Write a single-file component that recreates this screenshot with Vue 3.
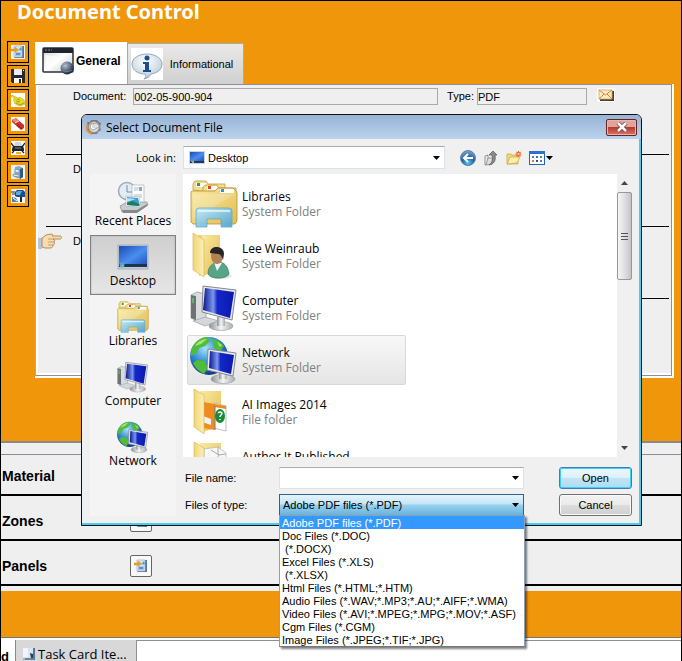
<script setup>
import { ref } from 'vue'

const tools = [
  { icon: 'i-import', name: 'Import' },
  { icon: 'i-save', name: 'Save' },
  { icon: 'i-point', name: 'Assign' },
  { icon: 'i-erase', name: 'Erase' },
  { icon: 'i-print', name: 'Print' },
  { icon: 'i-cabinet', name: 'Archive' },
  { icon: 'i-mailbox', name: 'Send' }
]

const places = [
  { icon: 'i-recent', name: 'Recent Places' },
  { icon: 'i-desktop', name: 'Desktop', active: true },
  { icon: 'i-libraries', name: 'Libraries' },
  { icon: 'i-computer', name: 'Computer' },
  { icon: 'i-network', name: 'Network' }
]

const entries = [
  { icon: 'i-libraries', name: 'Libraries', kind: 'System Folder' },
  { icon: 'i-user', name: 'Lee Weinraub', kind: 'System Folder' },
  { icon: 'i-computer', name: 'Computer', kind: 'System Folder' },
  { icon: 'i-network', name: 'Network', kind: 'System Folder', active: true },
  { icon: 'i-images', name: 'AI Images 2014', kind: 'File folder' },
  { icon: 'i-pages', name: 'Author It Published', kind: 'File folder' }
]

const types = [
  'Adobe PDF files (*.PDF)',
  'Doc Files (*.DOC)',
  ' (*.DOCX)',
  'Excel Files (*.XLS)',
  ' (*.XLSX)',
  'Html Files (*.HTML;*.HTM)',
  'Audio Files (*.WAV;*.MP3;*.AU;*.AIFF;*.WMA)',
  'Video Files (*.AVI;*.MPEG;*.MPG;*.MOV;*.ASF)',
  'Cgm Files (*.CGM)',
  'Image Files (*.JPEG;*.TIF;*.JPG)'
]

const documentNo = ref('002-05-900-904')
const documentType = ref('PDF')
const fileName = ref('')
const fileType = ref(types[0])
const folder = ref('Desktop')
</script>

<template>
  <svg class="sprite" aria-hidden="true">
    <defs>
      <linearGradient id="g-folder" x1="0" y1="0" x2="1" y2="1">
        <stop offset="0" stop-color="#f9e9a0" /><stop offset="1" stop-color="#e3bd52" />
      </linearGradient>
      <linearGradient id="g-flap" x1="0" y1="0" x2="1" y2="0">
        <stop offset="0" stop-color="#f2d675" /><stop offset="1" stop-color="#fbf0bb" />
      </linearGradient>
      <linearGradient id="g-stand" x1="0" y1="0" x2="1" y2="1">
        <stop offset="0" stop-color="#c4ecfb" /><stop offset="1" stop-color="#4da3d2" />
      </linearGradient>
      <linearGradient id="g-screen" x1="0" y1="0" x2="1" y2="0">
        <stop offset="0" stop-color="#0a1590" /><stop offset=".33" stop-color="#7b98ee" />
        <stop offset=".46" stop-color="#1527c6" /><stop offset="1" stop-color="#0a18ae" />
      </linearGradient>
      <linearGradient id="g-desk" x1="0" y1="0" x2="1" y2="1">
        <stop offset="0" stop-color="#1c4cb4" /><stop offset=".55" stop-color="#4a8eee" /><stop offset="1" stop-color="#1f50bc" />
      </linearGradient>
      <radialGradient id="g-globe" cx=".4" cy=".3" r=".7">
        <stop offset="0" stop-color="#a5e2fa" /><stop offset=".55" stop-color="#2f86cc" /><stop offset="1" stop-color="#123a86" />
      </radialGradient>
      <linearGradient id="g-metal" x1="0" y1="0" x2="1" y2="0">
        <stop offset="0" stop-color="#8b8f94" /><stop offset=".5" stop-color="#f4f5f6" /><stop offset="1" stop-color="#a8abaf" />
      </linearGradient>
      <radialGradient id="g-ball" cx=".35" cy=".3" r=".7">
        <stop offset="0" stop-color="#b9c6d6" /><stop offset="1" stop-color="#1e2b3f" />
      </radialGradient>
      <radialGradient id="g-bubble" cx=".45" cy=".3" r=".75">
        <stop offset="0" stop-color="#ffffff" /><stop offset=".7" stop-color="#ccd8e4" /><stop offset="1" stop-color="#8fa6bd" />
      </radialGradient>
      <radialGradient id="g-back" cx=".5" cy=".85" r=".85">
        <stop offset="0" stop-color="#4fc5f0" /><stop offset=".5" stop-color="#24639f" /><stop offset="1" stop-color="#86a9cf" />
      </radialGradient>
      <linearGradient id="g-window" x1="0" y1="0" x2="1" y2="1">
        <stop offset="0" stop-color="#cfcfcf" /><stop offset=".5" stop-color="#fff" /><stop offset="1" stop-color="#c9c9c9" />
      </linearGradient>

      <symbol id="i-import" viewBox="0 0 14 14">
        <rect width="14" height="14" fill="#f4f6f8" />
        <path d="M11 1h2v12H4l-1-1h8z" fill="#54759c" /><path d="M3 1h8v11H3z" fill="#dce9f5" stroke="#9db3cc" stroke-width=".7" />
        <path d="M4 7h6v4H4z" fill="#a9c6e4" /><path d="M5 8h4v2H5z" fill="#5f92c8" /><path d="M8 4l2-2 1 3-2 1z" fill="#4ba3cf" />
        <path d="M0 4h4V2l4 3-4 2V6H0z" fill="#eda41d" stroke="#bc7411" stroke-width=".3" />
      </symbol>
      <symbol id="i-save" viewBox="0 0 14 14">
        <rect width="14" height="14" fill="#fff" />
        <path d="M0 0h14v14H1l-1-1z" fill="#26282c" /><path d="M3 0h8v6H3z" fill="#e7edf2" />
        <path d="M3 9h8v5H3z" fill="#fff" /><path d="M8 10h2v4H8z" fill="#26282c" /><path d="M12 1h1v1h-1z" fill="#fff" />
      </symbol>
      <symbol id="i-point" viewBox="0 0 14 14">
        <rect width="14" height="14" fill="#fff" />
        <path d="M0 3l1-1 6 3 2-1 4 3 1 4-4 2-4-1-3-2 1-1-2-2 2-1z" fill="#e9db28" stroke="#b3a218" stroke-width=".5" />
        <path d="M5 10l4 2 4-2M5 8l4 1M6 6l3 1" stroke="#8b831c" fill="none" stroke-width=".7" />
      </symbol>
      <symbol id="i-erase" viewBox="0 0 14 14">
        <rect width="14" height="14" fill="#fff" />
        <path d="M1 3l4-2 8 7v3l-3 2-9-8z" fill="#cf2f2c" /><path d="M1 3l4-2 3 3-4 2z" fill="#ec8680" />
        <path d="M4 6l4-2" stroke="#fff" stroke-width=".8" /><path d="M6 8l5 4" stroke="#821716" />
      </symbol>
      <symbol id="i-print" viewBox="0 0 14 14">
        <rect width="14" height="14" fill="#fff" />
        <path d="M4 1h6l1 4H3z" fill="#cdd7e0" /><path d="M2 5h10l1 3v2H1V8z" fill="#202328" />
        <path d="M0 2l3 4M14 2l-3 4M1 12l2-2M13 12l-2-2" stroke="#202328" stroke-width="1.300" /><path d="M5 11h5v2H5z" fill="#f1b32c" />
        <path d="M4 7h6" stroke="#7d8894" />
      </symbol>
      <symbol id="i-cabinet" viewBox="0 0 14 14">
        <rect width="14" height="14" fill="#eef3f8" />
        <path d="M4 2l4-1 4 2v9l-3 2-6-2z" fill="#8ea9c6" /><path d="M9 4l3-1v9l-3 2z" fill="#36587f" />
        <path d="M4 4l4 1v3L4 7zM2 9l6 1v2l-6-1z" fill="#e6f2fc" stroke="#55799f" stroke-width=".6" />
      </symbol>
      <symbol id="i-mailbox" viewBox="0 0 14 14">
        <rect width="14" height="14" fill="#f2f6fa" />
        <path d="M4 3l2-2h6l2 2v5H6L4 7z" fill="#174e8f" /><path d="M5 3l2-1h4L9 6H5z" fill="#5aaade" />
        <path d="M9 8h2v5H9z" fill="#23272c" /><path d="M0 3h4M1 5h3" stroke="#242b36" />
        <path d="M1 8l4 1 2 4H1z" fill="#557da9" /><path d="M2 9l4 3" stroke="#fff" />
      </symbol>
      <symbol id="i-hand" viewBox="0 0 24 17">
        <path d="M0 4h4v12H0z" fill="#dbe8f5" /><path d="M1 5v11M3 5v11" stroke="#7495bd" stroke-width=".8" />
        <path d="M4 5l4-3 5-1c2 0 2 1 1 2h8c2 0 2 3 0 3h-7c2 1 2 2 1 3 1 1 0 3-1 3 0 2-1 3-3 3H7l-3-1z" fill="#f8dcae" stroke="#a9834f" stroke-width=".9" />
        <path d="M10 6h5M10 9h6M10 12h5" stroke="#b8905a" stroke-width=".8" />
      </symbol>
      <symbol id="i-mail" viewBox="0 0 16 12">
        <path d="M2 2h14v10H2z" fill="#4b4137" /><path d="M1 1h13v9H1z" fill="#fdebc8" stroke="#d6a25b" stroke-width=".8" />
        <path d="M1 1l6.500 5L14 1M1 10l5-5M14 10L9 5" stroke="#d58b26" fill="none" />
      </symbol>
      <symbol id="i-general" viewBox="0 0 32 28">
        <rect x="1" y="1" width="30" height="24" rx="1" fill="url(#g-window)" stroke="#2b313b" stroke-width="1.500" />
        <path d="M1 1h30v5H1z" fill="#20252e" /><path d="M3 3h7" stroke="#7e8896" stroke-dasharray="2 1" />
        <path d="M3 8l14 2L4 22z" fill="#fff" opacity=".6" />
        <circle cx="25" cy="21" r="6.500" fill="url(#g-ball)" /><path d="M20 19c3-3 7-3 9 0M20 23c3 2 7 2 10 0" stroke="#7e91a9" fill="none" stroke-width=".7" />
      </symbol>
      <symbol id="i-info" viewBox="0 0 32 32">
        <rect width="32" height="32" fill="#fff" />
        <path d="M16 6c8 0 15 4 15 10s-5 9-11 10c-1 2-3 4-7 5 2-2 2-3 1-5C7 26 1 22 1 16S8 6 16 6z" fill="url(#g-bubble)" stroke="#94a8bd" />
        <circle cx="16" cy="10" r="2.500" fill="#1a4f8f" />
        <path d="M12 14h6v8h2v2h-8v-2h2v-6h-2z" fill="#1a4f8f" />
      </symbol>
      <symbol id="i-app" viewBox="0 0 16 16">
        <path d="M1 3h3l1-2h6l2 2 2 1-1 4 1 3-3 2-1 2H6l-2-2-3-2 1-3z" fill="#77797c" />
        <circle cx="8" cy="8" r="5.500" fill="#dcdcdc" stroke="#909090" />
        <path d="M1 6c-1 4 1 8 5 9" stroke="#f08a22" stroke-width="2" fill="none" />
        <path d="M5 5l6-1 2 4-6 3-3-2z" fill="#fff" stroke="#808080" stroke-width=".7" /><path d="M6 6l5 0M6 8l5 0" stroke="#999" stroke-width=".7" />
      </symbol>
      <symbol id="i-monitor" viewBox="0 0 16 14">
        <rect x="0" y="0" width="16" height="13" fill="#c7d4e4" /><rect x="1" y="1" width="14" height="9" fill="url(#g-desk)" />
        <path d="M1 10h14v2H1z" fill="#23364f" /><path d="M2 9h2v2H2z" fill="#f06a35" /><path d="M3 10h2v2H3z" fill="#5dc2f0" />
      </symbol>
      <symbol id="i-desktop" viewBox="0 0 32 32">
        <rect x="1" y="4" width="30" height="24" fill="#c3ccd8" stroke="#8b97a6" stroke-width=".6" />
        <rect x="2" y="5" width="28" height="19" fill="url(#g-desk)" /><path d="M2 23h28v3H2z" fill="#1f3350" />
        <circle cx="5" cy="24" r="2.500" fill="#4aa7e0" /><path d="M4 23h1v1H4z" fill="#f25c2a" /><path d="M5 24h1v1H5z" fill="#ffe14a" />
      </symbol>
      <symbol id="i-recent" viewBox="0 0 32 32">
        <path d="M3 25l7-4h20l1 3-11 7H5z" fill="#c9cccf" stroke="#8a8d90" stroke-width=".7" /><path d="M5 29h15l10-6v2l-10 7H6z" fill="#85888c" />
        <circle cx="10" cy="10" r="8.500" fill="#e2ecf3" stroke="#9aacb9" stroke-width="1.500" /><path d="M10 4v7h5" stroke="#798c9b" fill="none" />
        <path d="M15 4h12v17H15z" fill="#fafcfd" stroke="#a9b1b8" stroke-width=".7" />
        <path d="M17 7h5M17 9h4M17 14h8M17 16h8" stroke="#99a2aa" stroke-width=".7" /><path d="M22 6h3v4h-3z" fill="#86a9bd" />
        <path d="M9 15l13 1 2 10-15-1z" fill="#fff" stroke="#9fb1be" stroke-width=".6" /><path d="M10 16l11 1 2 8-13-1z" fill="#3a9bd3" />
        <path d="M10 22l5-2 7 3v2l-12-1z" fill="#1d7d58" /><path d="M10 17l9 1-9 3z" fill="#b7e1f3" />
      </symbol>
      <symbol id="i-libraries" viewBox="0 0 48 48">
        <path d="M3 10V4l2-3h11l2 3h17v10z" fill="#f3df8f" stroke="#bf9a3a" stroke-width=".8" /><path d="M6 3h11v4H6z" fill="#fff" />
        <path d="M7 3h3v3H7z" fill="#2ca442" />
        <path d="M13 12V7l2-2h12l2 3h17v6z" fill="#f3df8f" stroke="#bf9a3a" stroke-width=".8" /><path d="M17 6h10v4H17z" fill="#fff" /><path d="M18 6h3v3h-3z" fill="#df4229" />
        <path d="M2 11h23l3-3h15l3 3 1 2v28l-2 3H3l-2-2V12z" fill="url(#g-folder)" stroke="#b99139" stroke-width=".8" />
        <path d="M30 9h14v4H30z" fill="#fff" /><path d="M31 9h3v3h-3z" fill="#2f94d2" />
        <path d="M3 14h42L3 39z" fill="#fff" opacity=".2" />
        <path d="M6 47V31q0-3 3-3h30q3 0 3 3v16H31v-8H17v8z" fill="url(#g-stand)" stroke="#5ba6c8" stroke-width=".8" opacity=".93" />
        <path d="M8 31h32" stroke="#e7f8fe" stroke-width="1.500" />
      </symbol>
      <symbol id="i-user" viewBox="0 0 48 48">
        <path d="M8 3h22v34l-21 7z" fill="#efd67a" /><path d="M12 3h18v34l-17 7z" fill="url(#g-folder)" />
        <path d="M3 1l11 7v37L3 38z" fill="url(#g-flap)" stroke="#d7b85d" stroke-width=".7" />
        <ellipse cx="31" cy="44" rx="11" ry="3" fill="#999" opacity=".25" />
        <path d="M18 42c0-8 5-11 10-12 7 0 10 5 11 12-2 5-18 6-21 0z" fill="#57a489" stroke="#327962" stroke-width=".7" />
        <path d="M24 30l3 9 5-8z" fill="#f4f4f4" /><ellipse cx="27" cy="24" rx="6" ry="8" fill="#b18157" />
        <path d="M20 21c0-8 14-8 14 1l-1 6c-1-4-3-6-5-6z" fill="#292524" />
      </symbol>
      <symbol id="i-computer" viewBox="0 0 48 48">
        <path d="M1 11l6-3 9 2v25l-9 2-6-3z" fill="#d9dcdf" stroke="#8c9196" stroke-width=".7" /><path d="M1 11l5 1v24l-5-2z" fill="#6d7277" />
        <path d="M3 14v5" stroke="#4fd653" stroke-width="1.500" /><path d="M3 37l12-4 14 4-14 5z" fill="#d5d8da" stroke="#8f9499" stroke-width=".6" />
        <ellipse cx="31" cy="42" rx="12" ry="4.500" fill="url(#g-metal)" stroke="#a0a4a8" stroke-width=".7" /><path d="M27 33h8v9h-8z" fill="url(#g-metal)" />
        <path d="M13 2l33 4-4 30-30-8z" fill="#e4e7ea" stroke="#85898e" stroke-width="1" /><path d="M15 4l29 4-4 26-27-8z" fill="url(#g-screen)" />
      </symbol>
      <symbol id="i-network" viewBox="0 0 48 48">
        <circle cx="19" cy="20" r="19" fill="url(#g-globe)" />
        <path d="M3 10C7 4 12 1 17 1l3 4-5 5-6 2-2 5-6 3c0-4 0-7 2-10zM22 3l7 2 5 5-4 5-6-3zM7 24l8 1 3 7-4 6C8 35 5 31 3 27z" fill="#4fbd39" />
        <path d="M5 10c3-5 8-7 12-7l-6 5zM27 6l5 3-2 2z" fill="#a9e56e" />
        <ellipse cx="33" cy="43" rx="12" ry="4.500" fill="url(#g-metal)" stroke="#a0a4a8" stroke-width=".7" /><path d="M29 35h8v8h-8z" fill="url(#g-metal)" />
        <path d="M18 13l28 4-3 23-26-6z" fill="#e9ecef" stroke="#85898e" stroke-width="1" /><path d="M20 15l24 4-3 19-22-6z" fill="url(#g-screen)" />
      </symbol>
      <symbol id="i-images" viewBox="0 0 48 48">
        <path d="M10 3h21v35l-18 6z" fill="url(#g-folder)" />
        <path d="M24 15l12 3v25l-12-3z" fill="#fff" stroke="#a5a5a5" stroke-width=".7" /><path d="M13 14l12 3v25l-12-2z" fill="#f08c1d" />
        <path d="M13 14l23 4v3l-23-4z" fill="#ee8b1e" /><path d="M13 28l8 3v6l-9-3z" fill="#eef1f3" /><path d="M25 18v24" stroke="#777" />
        <ellipse cx="30" cy="28" rx="5" ry="7" fill="#198c35" /><path d="M28 25q2-2 4 0c0 2-2 2-2 4M30 31v1" stroke="#fff" fill="none" stroke-width="1.500" />
        <path d="M4 1l10 6v39L4 39z" fill="url(#g-flap)" stroke="#d7b85d" stroke-width=".7" />
      </symbol>
      <symbol id="i-pages" viewBox="0 0 48 48">
        <path d="M10 3h21v34l-18 6z" fill="url(#g-folder)" /><path d="M14 9l14-2 8 6v30H14z" fill="#f7f7f7" stroke="#b5b5b5" stroke-width=".7" />
        <path d="M21 10l8 5-8 12M28 7v8l8-1" fill="none" stroke="#aaa" /><path d="M4 2l10 6v38L4 39z" fill="url(#g-flap)" stroke="#d7b85d" stroke-width=".7" />
      </symbol>
      <symbol id="i-back" viewBox="0 0 16 16">
        <circle cx="8" cy="8" r="7.500" fill="url(#g-back)" stroke="#4b6f9c" stroke-width=".8" />
        <path d="M13 8H4M8 4L4 8l4 4" stroke="#fff" stroke-width="2" fill="none" />
      </symbol>
      <symbol id="i-up" viewBox="0 0 16 16">
        <path d="M2 6l3-1v9l-3 1z" fill="#eee" stroke="#7b7b7b" stroke-width=".8" /><path d="M5 8h5l-1 6-6 1z" fill="#dedede" stroke="#8b8b8b" stroke-width=".8" />
        <path d="M6 15c3-2 4-5 3-10H6l4-4 4 4h-2c1 6-1 9-6 10z" fill="#8d8d8d" stroke="#555" stroke-width=".7" />
      </symbol>
      <symbol id="i-newfolder" viewBox="0 0 16 16">
        <path d="M1 4h4l1 1h6v9H1z" fill="#f3d774" stroke="#c9a13d" stroke-width=".7" /><path d="M1 14L4 7h10l-3 6z" fill="#fcedaa" stroke="#c9a13d" stroke-width=".7" />
        <path d="M12.500 1v6M9.500 4h6M10.500 2l4 4M14.500 2l-4 4" stroke="#f05a26" stroke-width="1.100" /><circle cx="12.500" cy="4" r="1.200" fill="#ffc38c" />
      </symbol>
      <symbol id="i-views" viewBox="0 0 16 14">
        <rect x=".5" y=".5" width="15" height="13" fill="#fff" stroke="#1f66b8" /><path d="M0 0h16v3H0z" fill="#2a72cc" />
        <path d="M3 5h2v2H3zM11 9h2v2h-2z" fill="#5b7fae" /><path d="M7 5h2v2H7z" fill="#3d65c4" /><path d="M11 5h2v2h-2z" fill="#36a449" />
        <path d="M3 9h2v2H3z" fill="#e07b2b" /><path d="M7 9h2v2H7z" fill="#2b46c0" />
      </symbol>
      <symbol id="i-down" viewBox="0 0 7 4"><path d="M0 0h7L3.500 4z" fill="#000" /></symbol>
      <symbol id="i-card" viewBox="0 0 14 14">
        <path d="M3 1h10v12H3z" fill="#5b7595" /><path d="M1 1h10v10H1z" fill="#d7e6f5" /><path d="M1 1h5v9H1z" fill="#fff" opacity=".6" />
        <path d="M8 6l3 1v4H9z" fill="#283c58" /><path d="M1 12h11" stroke="#84929f" />
      </symbol>
    </defs>
  </svg>

  <div class="page">
    <header class="banner"><h1>Document Control</h1></header>

    <main class="work">
      <nav class="tools" aria-label="Document tools">
        <button v-for="t in tools" :key="t.icon" type="button" :aria-label="t.name">
          <svg><use :href="'#' + t.icon" /></svg>
        </button>
      </nav>
      <section class="record">
        <div class="tabs" role="tablist">
          <button class="tab on" type="button" role="tab" aria-selected="true">
            <svg class="pic-general"><use href="#i-general" /></svg>General
          </button>
          <button class="tab" type="button" role="tab" aria-selected="false">
            <svg class="pic-info"><use href="#i-info" /></svg>Informational
          </button>
        </div>
        <div class="panel">
          <div class="sheet">
            <div class="line">
              <label class="lead" for="doc">Document:</label>
              <input id="doc" v-model="documentNo" class="grow" readonly />
              <label for="kind">Type:</label>
              <input id="kind" v-model="documentType" class="kind" readonly />
              <button class="mail" type="button" aria-label="Mail"><svg><use href="#i-mail" /></svg></button>
            </div>
            <div class="line"><span class="lead">D</span></div>
            <div class="line"><svg class="hand"><use href="#i-hand" /></svg><span>D</span></div>
            <div class="line last"></div>
          </div>
        </div>
      </section>
    </main>

    <section class="groups">
      <div class="group">Material</div>
      <div class="group">Zones
        <button type="button" aria-label="Add zone"><svg><use href="#i-import" /></svg></button>
      </div>
      <div class="group">Panels
        <button type="button" aria-label="Add panel"><svg><use href="#i-import" /></svg></button>
      </div>
    </section>

    <div class="band"></div>

    <footer class="bottom">
      <span class="cut">d</span>
      <button class="card" type="button"><svg><use href="#i-card" /></svg>Task Card Ite...</button>
      <div class="rest"></div>
    </footer>

    <div class="dialog" role="dialog" aria-labelledby="dlg-title">
      <div class="caption">
        <svg><use href="#i-app" /></svg>
        <h2 id="dlg-title">Select Document File</h2>
        <button class="close" type="button" aria-label="Close">
          <svg viewBox="0 0 12 10"><path d="M2 1l8 8M10 1L2 9" stroke="#5d3b3b" stroke-width="4" /><path d="M2 1l8 8M10 1L2 9" stroke="#fff" stroke-width="2.500" /></svg>
        </button>
      </div>

      <div class="body">
        <label class="look" for="folder">Look in:</label>
        <div class="lookbar">
          <div class="combo folder">
            <svg class="mon"><use href="#i-monitor" /></svg>
            <select id="folder" v-model="folder"><option>Desktop</option></select>
            <svg class="arrow"><use href="#i-down" /></svg>
          </div>
          <div class="icons">
            <button type="button" aria-label="Back"><svg><use href="#i-back" /></svg></button>
            <button type="button" aria-label="Up one level"><svg><use href="#i-up" /></svg></button>
            <button type="button" aria-label="New folder"><svg><use href="#i-newfolder" /></svg></button>
            <button type="button" aria-label="Views"><svg><use href="#i-views" /></svg><svg class="tiny"><use href="#i-down" /></svg></button>
          </div>
        </div>

        <nav class="places" aria-label="Places">
          <button v-for="p in places" :key="p.name" type="button" :class="{ on: p.active }">
            <svg><use :href="'#' + p.icon" /></svg>{{ p.name }}
          </button>
        </nav>

        <div class="right">
          <div class="browser">
            <ul class="entries">
              <li v-for="e in entries" :key="e.name" :class="{ on: e.active }">
                <svg><use :href="'#' + e.icon" /></svg>
                <div><div>{{ e.name }}</div><div class="dim">{{ e.kind }}</div></div>
              </li>
            </ul>
            <div class="bar" aria-hidden="true">
              <svg viewBox="0 0 7 4"><path d="M0 4h7L3.500 0z" fill="#444" /></svg>
              <div class="thumb"><i></i><i></i><i></i></div>
              <svg class="end" viewBox="0 0 7 4"><path d="M0 0h7L3.500 4z" fill="#444" /></svg>
            </div>
          </div>

          <form class="fields" @submit.prevent>
            <label for="fname">File name:</label>
            <div class="combo">
              <input id="fname" v-model="fileName" />
              <svg class="arrow"><use href="#i-down" /></svg>
            </div>
            <button class="push main" type="submit">Open</button>
            <label for="ftype">Files of type:</label>
            <div class="combo open">
              <select id="ftype" v-model="fileType"><option v-for="t in types" :key="t" :value="t">{{ t }}</option></select>
              <svg class="arrow"><use href="#i-down" /></svg>
              <ul class="menu" role="listbox" aria-label="Files of type">
                <li v-for="t in types" :key="t" role="option" :aria-selected="t === fileType" @click="fileType = t">{{ t }}</li>
              </ul>
            </div>
            <button class="push" type="button">Cancel</button>
          </form>
        </div>
      </div>
    </div>
  </div>
</template>

<style>
body { margin: 0; }
</style>

<style scoped>
* { box-sizing: border-box; }
.sprite { position: absolute; width: 0; height: 0; }
svg { display: block; flex: none; }
button { margin: 0; padding: 0; border: 0; background: none; font: inherit; color: inherit; }
input, select { min-width: 0; margin: 0; font: inherit; color: #000; border-radius: 0; outline: none; }
ul { list-style: none; margin: 0; padding: 0; }

.page {
  position: relative;
  display: flex;
  flex-direction: column;
  min-height: 100vh;
  overflow: hidden;
  border: 1px solid #000;
  background: #f0960a;
  font: 11px/14px "Liberation Sans", Arial, sans-serif;
  color: #000;
}
.banner { height: 40px; padding-left: 16px; }
h1 { margin: 0; font: bold 20px/22px "Noto Sans", "Open Sans", sans-serif; color: #fff; }

.work { display: flex; align-items: flex-start; gap: 6px; padding: 0 7px 63px 6px; }
.tools { display: flex; flex-direction: column; gap: 2px; }
.tools button { width: 22px; height: 22px; padding: 3px; border: 1px solid #000; }
.tools svg { width: 14px; height: 14px; }
.record { flex: 1; min-width: 0; padding-top: 1px; }
.tabs { display: flex; align-items: flex-end; }
.tab {
  display: flex; align-items: center; gap: 7px;
  height: 41px; padding: 0 10px 0 3px;
  border: 1px solid #a9a9a9; border-bottom: 0;
  background: linear-gradient(#e9e9e9, #d0d0d0);
}
.tab.on { height: 42px; gap: 2px; padding: 0 6px 4px 7px; border: 0; background: #fff; font-weight: bold; font-size: 12px; }
.pic-general { width: 32px; height: 28px; }
.pic-info { width: 32px; height: 32px; }
.panel { padding: 0 2px 2px 0; background: #fff; }
.sheet { height: 292px; padding-right: 2px; border: 1px solid #8f8f98; border-left-color: #aab; background: #efefef; box-shadow: inset 2px 0 #fff, inset 0 -2px #fff; }
.line { display: flex; align-items: flex-start; height: 72px; margin-left: 10px; padding-top: 6px; border-bottom: 1px solid #000; }
.line:first-child { height: 70px; padding-top: 3px; }
.line.last { border: 0; }
.line label, .line span { line-height: 16px; }
.lead { margin-left: 27px; }
.line input { height: 17px; padding: 0; border: 1px solid #a9a9a9; background: #efefef; }
.line .lead + input { margin: 0 9px 0 7px; }
.grow { flex: 1; }
.kind { width: 110px; margin: 0 10px 0 3px; }
.mail { margin: 0 54px 0 0; padding: 1px; background: #fff; }
.mail svg { width: 16px; height: 12px; }
.hand { width: 24px; height: 17px; margin: 0 11px 0 -8px; }

.groups { padding-bottom: 5px; border-top: 2px solid #8a8a8a; background: #efefef; }
.groups::before { content: ""; display: block; height: 11px; border-bottom: 1px solid #8d8d95; }
.group { display: flex; align-items: center; height: 45px; padding: 6px 0 0 1px; border-bottom: 2px solid #000; font-size: 14px; font-weight: bold; position: relative; }
.group:first-child { height: 41px; padding-top: 2px; }
.group button { position: absolute; left: 129px; width: 22px; height: 22px; padding: 3px; border: 1px solid #666; border-radius: 2px; background: #f8f8f8; }
.group button svg { width: 14px; height: 14px; }
.band { height: 46px; }
.bottom { flex: 1 0 24px; display: flex; align-items: stretch; height: 24px; padding-top: 2px; border-top: 1px solid #777; background: #fff; }
.cut { width: 14px; padding-top: 10px; font: bold 13px/14px "Liberation Sans", sans-serif; }
.card { display: flex; align-items: center; gap: 2px; width: 121px; padding: 6px 0 0 6px; border-left: 1px solid #888; background: #d8d8d8; font: 13px/18px "Open Sans", sans-serif; white-space: nowrap; }
.card svg { width: 14px; height: 14px; }
.rest { flex: 1; border: 1px solid #8f8f8f; border-width: 1px 0 0 1px; }

.dialog {
  position: absolute; top: 113px; left: 80px; right: 39px;
  border: 1px solid #111; border-radius: 6px 6px 0 0;
  background: #f0f0f0;
  box-shadow: inset -2px -2px #45cdf2, inset 1px 0 #e8f2fb;
  font: 11px/15px "Open Sans", "Noto Sans", sans-serif;
}
.caption { display: flex; align-items: center; gap: 4px; height: 24px; padding: 0 4px; border-radius: 5px 5px 0 0; background: linear-gradient(#98b4d4, #bad2ec); }
.caption svg { width: 16px; height: 16px; }
h2 { flex: 1; margin: 0; font: inherit; font-size: 12px; }
.close { display: grid; place-items: center; width: 31px; height: 17px; border: 1px solid #6a2323; border-radius: 2px; background: linear-gradient(#dfa49a 0 45%, #b93a2c 50%, #d4776b); box-shadow: inset 0 0 0 1px #e7b5ad; }
.close svg { width: 12px; height: 10px; }

.body { display: grid; grid-template-columns: 86px 1fr; column-gap: 7px; row-gap: 5px; padding: 7px 9px 9px 8px; }
.look { align-self: center; text-align: right; }
.lookbar { display: flex; align-items: center; gap: 15px; padding-right: 79px; }
.combo { position: relative; display: flex; align-items: center; height: 23px; border: 1px solid #dce2ec; border-top-color: #a8adb5; background: #fff; font: 11px/14px "Liberation Sans", Arial, sans-serif; }
.combo select, .combo input { flex: 1; width: 100%; height: 100%; padding: 0 16px 0 3px; border: 0; background: none; appearance: none; }
.arrow { position: absolute; right: 4px; width: 7px; height: 4px; pointer-events: none; }
.folder { flex: 1; padding-left: 5px; }
.mon { width: 16px; height: 14px; }
.icons { display: flex; gap: 7px; }
.icons button { display: flex; align-items: center; gap: 1px; }
.icons svg { width: 16px; height: 16px; }
.icons .tiny { width: 7px; height: 4px; }

.places { display: flex; flex-direction: column; padding: 1px 0 36px; background: #f4f4f4; font-size: 12px; }
.places button { display: flex; flex-direction: column; align-items: center; height: 60px; padding-top: 5px; white-space: nowrap; border: 1px solid transparent; }
.places button.on { border-color: #808080; background: linear-gradient(#cfcfcf, #e6e6e6); box-shadow: inset 0 0 2px #aaa; }
.places svg { width: 32px; height: 32px; }

.right { min-width: 0; }
.browser { display: flex; height: 283px; }
.entries { flex: 1; overflow: hidden; padding: 5px 4px; background: #fff; font-size: 12px; }
.entries li { display: flex; align-items: center; gap: 4px; width: 219px; height: 50px; margin-bottom: 2px; padding-left: 2px; border: 1px solid transparent; border-radius: 2px; }
.entries li.on { border-color: #d9d9d9; background: linear-gradient(#f8f8f8, #e5e5e5); }
.entries svg { width: 48px; height: 48px; }
.dim { color: #808080; }
.bar { display: flex; flex-direction: column; align-items: center; width: 15px; padding: 7px 0; background: #f0f0f0; }
.bar svg { width: 7px; height: 4px; }
.bar .end { margin-top: auto; }
.thumb { display: flex; flex-direction: column; align-items: center; justify-content: center; gap: 2px; width: 15px; height: 88px; margin-top: 7px; border: 1px solid #979797; border-radius: 2px; background: linear-gradient(90deg, #f5f5f5, #e2e2e4 45%, #c4c5c9); }
.thumb i { width: 7px; height: 1px; background: #555; }

.fields { display: grid; grid-template-columns: 94px 1fr 73px; row-gap: 5px; align-items: center; padding: 10px 0 0 2px; font: 11px/14px "Liberation Sans", Arial, sans-serif; }
.fields .combo { height: 22px; margin-right: 35px; }
.fields .combo.open { border: 1px solid #2c628b; background: linear-gradient(#e3f4fc, #c4e5f6 45%, #98d1ef 50%, #68b3db); }
.push { height: 22px; border: 1px solid #707070; border-radius: 3px; background: linear-gradient(#f2f2f2, #ebebeb 48%, #dddddd 50%, #cfcfcf); box-shadow: inset 0 0 0 1px #fafafa; }
.push.main { border-color: #3c7fb1; background: linear-gradient(#eef8fd, #dcf0fb 48%, #c2e4f6 50%, #b0daf2); box-shadow: inset 0 0 0 1px #3fd0f8; }
.menu { position: absolute; z-index: 2; top: 100%; left: -1px; right: -2px; border: 1px solid #8aa0b8; border-bottom-color: #777; background: #fff; box-shadow: 2px 2px 2px rgba(0, 0, 0, .5); }
.menu li { height: 13px; padding-left: 2px; line-height: 14px; white-space: pre; }
.menu li[aria-selected="true"] { background: #3399ff; color: #fff; }
</style>
